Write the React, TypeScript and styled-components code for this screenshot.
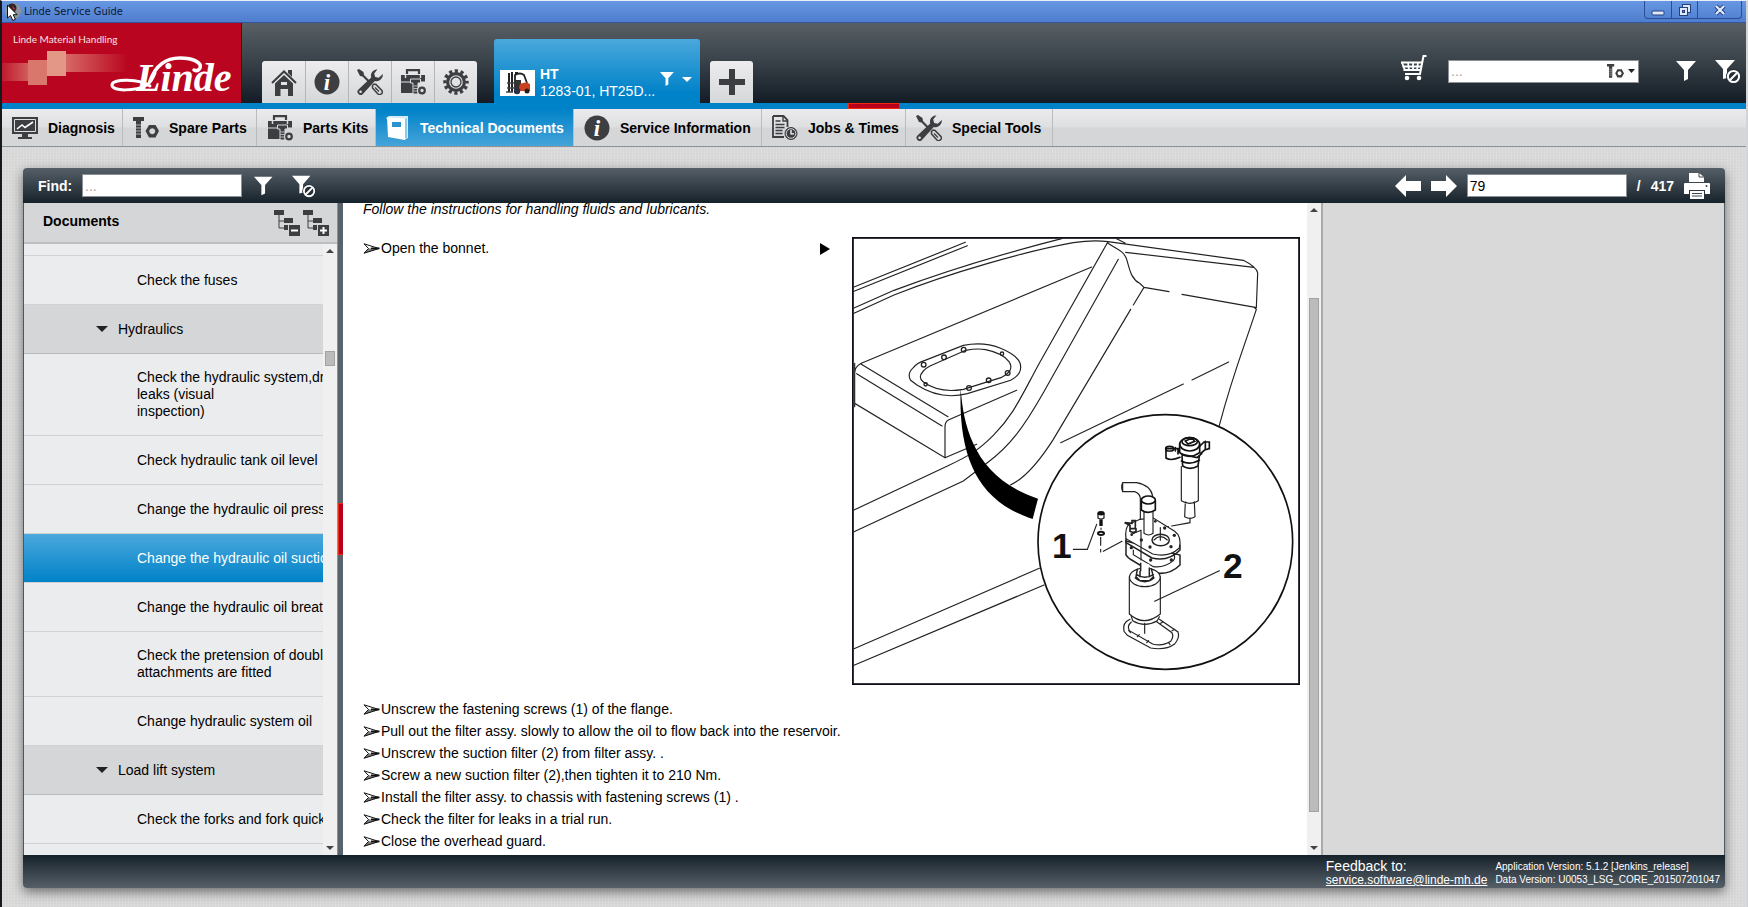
import React from "react";
import styled, { createGlobalStyle, css } from "styled-components";

const SANS = `"Liberation Sans", Arial, sans-serif`;
const BLUE = "#0082c8";

const Global = createGlobalStyle`
  *, *::before, *::after { box-sizing: border-box; }
  body { margin: 0; background: #fff; font-family: ${SANS}; font-size: 14px; color: #000; }
  button, input { font: inherit; color: inherit; margin: 0; }
  button { border: 0; padding: 0; background: none; cursor: pointer; }
  svg { display: block; flex: none; }
`;

/* ---------- window frame ---------- */

const Window = styled.div`
  display: flex;
  flex-direction: column;
  min-height: 100vh;
  border-left: 2px solid #15181c;
  border-right: 2px solid #d2d4d8;
  border-top: 1px solid #e8eef8;
`;

const TitleBar = styled.div`
  display: flex;
  align-items: flex-start;
  height: 22px;
  background: linear-gradient(#6797e2, #4f7dcf);
  border-bottom: 1px solid #34569a;
`;

const TitleText = styled.span`
  flex: 1;
  padding-left: 2px;
  font: 11px/21px "DejaVu Sans Condensed", "Noto Sans", sans-serif;
  color: #0c1730;
`;

const WindowButtons = styled.div`
  display: flex;
  margin-right: 4px;
  border: 1px solid #2b4c92;
  border-top: 0;
  border-radius: 0 0 4px 4px;
`;

const WindowButton = styled.button<{ $wide?: boolean }>`
  display: grid;
  place-items: center;
  width: ${(p) => (p.$wide ? 44 : 26)}px;
  height: 17px;
  & + & { border-left: 1px solid #2b4c92; }
`;

/* ---------- header ---------- */

const Header = styled.header`
  display: flex;
  align-items: flex-end;
  height: 80px;
  background: linear-gradient(#585f65, #3b444b 45%, #131c24);
`;

const Brand = styled.div`
  width: 240px;
  height: 80px;
  background: #b9051f;
  border-right: 1px solid #10161b;
`;

const IconTabs = styled.nav`
  display: flex;
  margin-left: 20px;
  border-radius: 3px 3px 0 0;
  overflow: hidden;
`;

const IconTab = styled.button`
  display: grid;
  place-items: center;
  width: 43px;
  height: 42px;
  background: linear-gradient(#ececee, #d6d7d9);
  & + & { border-left: 1px solid #b4b6b9; }
`;

const AddTab = styled(IconTab)`
  margin-left: 10px;
  border-radius: 3px 3px 0 0;
`;

const MachineTab = styled.button`
  display: flex;
  align-items: flex-end;
  width: 206px;
  height: 64px;
  margin-left: 17px;
  padding: 0 6px 3px;
  border-radius: 3px 3px 0 0;
  background: linear-gradient(#4aa8dc, ${BLUE} 85%);
  color: #fff;
  text-align: left;
`;

const Thumb = styled.span`
  display: grid;
  place-items: center;
  width: 35px;
  height: 26px;
  margin-bottom: 4px;
  background: #fff;
`;

const MachineName = styled.span`
  flex: 1;
  padding-left: 5px;
  line-height: 17px;
  white-space: nowrap;
  strong { display: block; }
`;

const MachineTools = styled.span`
  display: flex;
  align-items: center;
  gap: 4px;
  margin: 0 2px 12px 0;
`;

const HeaderTools = styled.div`
  display: flex;
  align-items: center;
  height: 26px;
  margin: 0 5px 19px auto;
`;

const IconButton = styled.button<{ $gap?: number }>`
  margin-left: ${(p) => p.$gap ?? 0}px;
`;

const SearchBox = styled.div`
  display: flex;
  align-items: center;
  width: 191px;
  height: 23px;
  margin: 0 37px 0 21px;
  padding-right: 3px;
  border: 1px solid #8b9196;
  background: #fff;
`;

const SearchInput = styled.input`
  flex: 1;
  min-width: 0;
  height: 21px;
  padding: 0 2px;
  border: 0;
  outline: 0;
  background: none;
  &::placeholder { color: #a5a5a5; opacity: 1; }
`;

/* ---------- module tabs ---------- */

const Strip = styled.div`
  display: flex;
  justify-content: center;
  height: 6px;
  background: ${BLUE};
`;

const StripHandle = styled.span`
  width: 52px;
  background: #b8001c;
  border: 1px solid #f22a10;
`;

const ModuleBar = styled.nav`
  display: flex;
  height: 38px;
  background: linear-gradient(#ebebed, #dedfe1 48%, #d5d6d8 52%);
  border-bottom: 1px solid #8d9295;
`;

const ModuleTab = styled.button<{ $width: number; $active?: boolean }>`
  display: flex;
  align-items: center;
  gap: 10px;
  width: ${(p) => p.$width}px;
  padding-left: 10px;
  border-right: 1px solid #b9bbbe;
  font-weight: bold;
  white-space: nowrap;
  ${(p) =>
    p.$active &&
    css`
      background: linear-gradient(${BLUE}, #46a4d9);
      color: #fff;
    `}
`;

/* ---------- main panel ---------- */

const Desk = styled.main`
  flex: 1;
  display: flex;
  padding: 21px 21px 19px;
  background:
    repeating-linear-gradient(90deg, rgba(255, 255, 255, 0.14) 0 1px, transparent 1px 3px),
    repeating-linear-gradient(rgba(0, 0, 0, 0.02) 0 1px, transparent 1px 3px),
    #d9d9d9;
`;

const Panel = styled.section`
  flex: 1;
  min-width: 0;
  display: flex;
  flex-direction: column;
  border-radius: 4px;
  overflow: hidden;
  box-shadow: 0 4px 12px rgba(0, 0, 0, 0.5);
`;

const Toolbar = styled.div`
  display: flex;
  align-items: center;
  height: 35px;
  padding: 0 15px;
  background: linear-gradient(#565f67, #16222a);
  color: #fff;
  font-weight: bold;
`;

const Field = styled.input`
  width: 160px;
  height: 23px;
  padding: 0 2px;
  border: 1px solid #8b9196;
  border-radius: 0;
  outline: 0;
  background: #fff;
  color: #000;
  font-weight: normal;
  &::placeholder { color: #a5a5a5; opacity: 1; }
`;

const FindLabel = styled.label`
  width: 44px;
`;

const PageTools = styled.div`
  display: flex;
  align-items: center;
  gap: 10px;
  margin-left: auto;
`;

const Columns = styled.div`
  flex: 1;
  display: flex;
  min-height: 0;
  border: solid #4e5860;
  border-width: 0 1px;
  background: #d9d9d9;
`;

const Sidebar = styled.aside`
  flex: none;
  width: 313px;
  display: flex;
  flex-direction: column;
  background: #ebecee;
`;

const SidebarHead = styled.div`
  display: flex;
  align-items: center;
  gap: 3px;
  height: 41px;
  padding: 0 8px 0 19px;
  background: #d5d6d8;
  border-bottom: 2px solid #bcbec1;
  h2 { flex: 1; margin: 0; padding-bottom: 3px; font-size: 14px; line-height: 17px; }
`;

const SidebarBody = styled.div`
  flex: 1;
  display: flex;
  min-height: 0;
`;

const Tree = styled.ul`
  flex: 1;
  min-width: 0;
  height: 610px;
  margin: 0;
  padding: 0;
  list-style: none;
  overflow: hidden;
  background: #ebecee;
`;

const TreeItem = styled.li<{ $rest?: boolean }>`
  ${(p) => p.$rest && css`height: 12px; border-bottom: 1px solid #cfd1d4;`}
`;

const TreeRow = styled.button<{ $kind: "leaf" | "group" | "selected" }>`
  display: flex;
  align-items: center;
  gap: 10px;
  width: 100%;
  min-height: 49px;
  padding: 15px 0 15px ${(p) => (p.$kind === "group" ? 72 : 113)}px;
  border-bottom: 1px solid #cfd1d4;
  line-height: 17px;
  text-align: left;
  white-space: pre;
  overflow: hidden;
  ${(p) => p.$kind === "group" && css`background: #d5d6d8; border-color: #b8bbbe;`}
  ${(p) => p.$kind === "selected" && css`background: linear-gradient(#4ba8dc, ${BLUE}); color: #fff;`}
`;

const Track = styled.div`
  flex: none;
  display: flex;
  flex-direction: column;
  align-items: center;
  width: 14px;
  background: #f0f0f1;
`;

const TrackArrow = styled.button`
  display: grid;
  place-items: center;
  width: 14px;
  height: 14px;
`;

const Part = styled.span<{ $share: number; $thumb?: boolean }>`
  flex: ${(p) => p.$share} 1 0;
  width: 10px;
  ${(p) => p.$thumb && css`background: #bbb; border: 1px solid #a3a3a3;`}
`;

const Splitter = styled.div`
  flex: none;
  display: flex;
  align-items: center;
  width: 6px;
  background: #58626a;
  border-left: 1px solid #8a9197;
`;

const SplitHandle = styled.span`
  width: 5px;
  height: 52px;
  background: #b8001c;
  border: solid #f22a10;
  border-width: 1px 0 1px 1px;
`;

const Viewer = styled.div`
  flex: 979 1 0;
  min-width: 0;
  display: flex;
  background: #fff;
  border-right: 2px solid #aaa;
`;

const Blank = styled.div`
  flex: 402 1 0;
`;

const Page = styled.article`
  flex: 1;
  min-width: 0;
  padding: 0 7px 0 20px;
`;

const Note = styled.p`
  margin: 0 0 22px;
  line-height: 12px;
  font-style: italic;
`;

const FigureRow = styled.div`
  display: flex;
  margin-bottom: 13px;
`;

const Pointer = styled.span`
  margin: 6px 22px 0 auto;
`;

const Steps = styled.ul`
  margin: 0;
  padding: 0;
  list-style: none;
`;

const StepText = styled.li`
  display: flex;
  align-items: center;
  gap: 1px;
  height: 22px;
  line-height: 22px;
  white-space: nowrap;
`;

const Footer = styled.footer`
  display: flex;
  justify-content: flex-end;
  gap: 8px;
  height: 33px;
  padding-right: 5px;
  background: linear-gradient(#16222a, #565f67);
  color: #fff;
`;

const Feedback = styled.div`
  padding-top: 3px;
  line-height: 16px;
  a { display: block; color: #fff; font-size: 12px; line-height: 13px; }
`;

const Versions = styled.div`
  padding-top: 5px;
  font-size: 10px;
  line-height: 13px;
  white-space: nowrap;
`;

/* ---------- icons ---------- */

const INK = "#3c3e41";

const Home = () => (
  <svg width="26" height="27" viewBox="0 0 26 27" fill={INK}>
    <path d="M17 1h4v7l-4-4z" />
    <path d="M1 14 13 2.500 25 14" fill="none" stroke={INK} strokeWidth="2" />
    <path d="M4 14.500 13 6l9 8.500V27h-5v-7H9.500v7H4z" />
    <path d="M10 13h6v3h-6z" fill="#e2e3e5" />
  </svg>
);

const Info = () => (
  <svg width="26" height="26" viewBox="0 0 26 26">
    <circle cx="13" cy="13" r="12.500" fill={INK} />
    <text x="13" y="20.500" textAnchor="middle" fill="#fff" fontFamily="Liberation Serif, serif" fontStyle="italic" fontWeight="bold" fontSize="23">i</text>
  </svg>
);

const Tools = () => (
  <svg width="26" height="26" viewBox="0 0 26 26">
    <path d="m0 1 2-1 4.500 3 .5 3 6 6-1.500 1.500-6-6-2.500-.5z" fill={INK} />
    <path d="M15.500 16.500l1.500-1.500 2 .5 5.500 5.500a2.600 2.600 0 0 1-3.800 3.800L15.500 19z" fill="#d6d7d9" stroke={INK} strokeWidth="1.500" />
    <path d="m18 18.500 4 4" stroke={INK} strokeWidth="1.300" />
    <path d="M20.500.2a6.500 6.500 0 0 0-6.300 8.300L1.200 20.800a3.200 3.200 0 0 0 4.500 4.500L17.800 12A6.500 6.500 0 0 0 25.800 5l-4 3.800-3.600-.8-1-3.600z" fill={INK} />
    <circle cx="3.600" cy="22.700" r="1.300" fill="#e2e3e5" />
  </svg>
);

const Toolbox = () => (
  <svg width="26" height="26" viewBox="0 0 26 26" fill={INK}>
    <path d="M7 5V1.200h12V5" fill="none" stroke={INK} strokeWidth="2.200" />
    <path d="M1 6h24v6.500H1z" />
    <path d="M1 13.500h12V24H1z" />
    <path d="M5.500 6v3M20.500 6v3" stroke="#d9dadc" strokeWidth="1.500" />
    <path d="M10.500 10h10v4h-2.500v11h-5V14h-2.500z" stroke="#d9dadc" strokeWidth="1" />
    <path d="M13.500 17h4M13.500 19.500h4M13.500 22h4" stroke="#d9dadc" strokeWidth=".8" />
    <circle cx="22" cy="21.500" r="5" fill="#d9dadc" />
    <circle cx="22" cy="21.500" r="2.800" fill="none" stroke={INK} strokeWidth="2.200" />
  </svg>
);

const Gear = () => (
  <svg width="26" height="26" viewBox="0 0 26 26" fill="none" stroke={INK}>
    <circle cx="13" cy="13" r="11" strokeWidth="3.500" strokeDasharray="3.200 2.560" strokeDashoffset="1.600" />
    <circle cx="13" cy="13" r="8.400" strokeWidth="3.200" />
    <circle cx="13" cy="13" r="5" strokeWidth="1.300" />
  </svg>
);

const Plus = () => (
  <svg width="26" height="26" viewBox="0 0 26 26" fill={INK}>
    <path d="M10 0h6v10h10v6H16v10h-6V16H0v-6h10z" />
  </svg>
);

const Monitor = () => (
  <svg width="26" height="22" viewBox="0 0 26 22" fill={INK}>
    <path d="M0 0h26v17H0z" />
    <path d="M2.500 2.500h21v12h-21z" stroke="#dcdde0" strokeWidth="1" />
    <path d="m5 12 5-4 3 2.500L21 5" fill="none" stroke="#fff" strokeWidth="1.600" />
    <path d="M10 17h6v3h4v2H6v-2h4z" />
  </svg>
);

const Bolts = ({ size = 26 }: { size?: number }) => (
  <svg width={size} height={(size * 22) / 26} viewBox="0 0 26 22" fill={INK}>
    <path d="M0 0h11v4H8v17H3V4H0z" />
    <path d="M3 8h5M3 11h5M3 14h5M3 17h5" stroke="#cfd0d2" strokeWidth=".8" />
    <path fillRule="evenodd" d="m16 8 6.500 0 3.500 6-3.500 6.500H16L12.500 14zm3.200 3.200a3 3 0 1 0 .1 0z" />
  </svg>
);

const Book = () => (
  <svg width="24" height="26" viewBox="0 0 24 26">
    <path d="M0 3 3 1l19 0v22l-4 2z" fill="#d6ebf7" />
    <path d="M1 2.500 19 3.500V25L2 22z" fill="#fff" />
    <path d="M6 7h9v5H6z" fill="#2d93cd" />
    <path d="M20 3.500V23" stroke="#4aa3d6" strokeWidth="1" />
  </svg>
);

const Jobs = () => (
  <svg width="26" height="26" viewBox="0 0 26 26" fill="none" stroke={INK}>
    <path d="M1 1h10.500l4 4v7M12 22H1V1" strokeWidth="1.800" />
    <path d="M11 1v5h5" strokeWidth="1.400" />
    <path d="M3.500 6h5M3.500 9.500h9M3.500 12.500h9M3.500 15.500h7M3.500 18.500h7" strokeWidth="1.400" />
    <circle cx="19" cy="18.500" r="6" fill={INK} strokeWidth="1" />
    <circle cx="19" cy="18.500" r="4.800" stroke="#d9dadc" strokeWidth="1" />
    <path d="M19 15v3.800h3" stroke="#fff" strokeWidth="1.300" />
  </svg>
);

const Funnel = ({ size = 26 }: { size?: number }) => (
  <svg width={size} height={size} viewBox="0 0 26 26" fill="#fff">
    <path d="M0 3h20l-8 9v9l-4 2V12z" />
  </svg>
);

const FunnelOff = ({ size = 26 }: { size?: number }) => (
  <svg width={size} height={size} viewBox="0 0 26 26" fill="#fff">
    <path d="M0 2h20l-8 9v9l-4 1V11z" />
    <circle cx="18.500" cy="18.500" r="7.500" fill="#252f37" />
    <circle cx="18.500" cy="18.500" r="5.600" fill="none" stroke="#fff" strokeWidth="2" />
    <path d="m14.800 22.200 7.400-7.400" stroke="#fff" strokeWidth="2" />
  </svg>
);

const Cart = () => (
  <svg width="26" height="32" viewBox="0 0 26 32" fill="none" stroke="#fff">
    <path d="M25.500 1h-3L19 19H4" strokeWidth="2" />
    <path d="M0 7.500h21.500M1.500 11.500h19M2.500 15h17" strokeWidth="2" />
    <path d="M1 7.500l3 8M7 7.500l1 8M12 7.500v8M17 7.500l-1 8" strokeWidth="1.800" />
    <circle cx="6" cy="23" r="2.300" fill="#fff" stroke="none" />
    <circle cx="18" cy="23" r="2.300" fill="#fff" stroke="none" />
  </svg>
);

const Caret = ({ color = "#222", width = 12, height = 6, up = false }) => (
  <svg width={width} height={height} viewBox="0 0 12 6" preserveAspectRatio="none" fill={color}>
    <path d={up ? "M0 6h12L6 0z" : "M0 0h12L6 6z"} />
  </svg>
);

const Arrow = ({ back }: { back?: boolean }) => (
  <svg width="26" height="22" viewBox="0 0 26 22" fill="#fff">
    <path d={back ? "M0 11 11 0v6h15v10H11v6z" : "M26 11 15 0v6H0v10h15v6z"} />
  </svg>
);

const Printer = () => (
  <svg width="26" height="26" viewBox="0 0 26 26" fill="#fff">
    <path d="M5 9V0h10l5 4v5z" />
    <path d="M15 0v4h5" fill="none" stroke="#3a444c" />
    <path d="M0 11q0-1 1-1h24q1 0 1 1v10h-5v-4H5v4H0z" />
    <path d="M6 18h14v8H6z" />
    <path d="M8 20.500h10M8 23h10" stroke="#3a444c" />
    <circle cx="22.500" cy="13" r="1" fill="#3a444c" />
  </svg>
);

const TreeIcon = ({ plus }: { plus?: boolean }) => (
  <svg width="26" height="26" viewBox="0 0 26 26" fill={INK}>
    <path d="M0 0h10v5H0zM10 8h9v5h-9zM10 15h4v5h-4z" />
    <path d="M5 5v13h5M5 11h5" fill="none" stroke={INK} />
    <path d="M15 15h11v11H15z" />
    <path d={plus ? "M17 20.500h7M20.500 17v7" : "M17 20.500h7"} stroke="#fff" strokeWidth="2" />
  </svg>
);

const StepMark = () => (
  <svg width="17" height="11" viewBox="0 0 17 11">
    <path d="M1 .8 16 5.500 1 10.200 5.500 5.500z" fill="#fff" stroke="#111" strokeWidth="1" />
    <path d="m5.500 5.500 11 0L1 10.500z" fill="#111" opacity=".55" />
    <path d="M8 4.500h8.500v1.800H8z" fill="#111" />
  </svg>
);

const Forklift = () => (
  <svg width="24" height="24" viewBox="0 0 24 24">
    <path d="M3 2v19M6 1v20M9 2l3 0" stroke="#222" strokeWidth="2" />
    <path d="M9 11V4q5-3 9 0l3 8" fill="none" stroke="#222" strokeWidth="1.800" />
    <path d="M8 9h7v9H8z" fill="#333" />
    <path d="M14 13q6-3 10 0v7H12z" fill="#c8401f" />
    <path d="M1 12h8M0 21h7M1 17h8" stroke="#444" strokeWidth="1.500" />
    <circle cx="11" cy="20" r="3.200" fill="#2c2f45" />
    <circle cx="21" cy="20" r="2.500" fill="#2c1b1b" />
  </svg>
);

const AppIcon = () => (
  <svg width="20" height="21" viewBox="0 0 20 21">
    <circle cx="11" cy="10" r="8" fill="#8e959c" />
    <circle cx="10" cy="7" r="4.500" fill="#23262b" />
    <path d="m10 4 4 5-3-1z" fill="#d8202c" />
    <path d="M5.500 4v13l3-2.500 2.300 5 2.600-1.200-2.200-4.600h4z" fill="#fff" stroke="#111" />
  </svg>
);

const BrandArt = () => (
  <svg width="239" height="80" viewBox="0 0 239 80" role="img" aria-label="Linde">
    <defs>
      <linearGradient id="fadeL"><stop offset="0" stopColor="#e08a7c" stopOpacity=".15" /><stop offset="1" stopColor="#e08a7c" stopOpacity=".65" /></linearGradient>
      <linearGradient id="fadeR"><stop offset="0" stopColor="#e08a7c" stopOpacity=".75" /><stop offset="1" stopColor="#e08a7c" stopOpacity="0" /></linearGradient>
    </defs>
    <text x="11" y="20" fill="#f7e3e1" fontFamily="Lato, sans-serif" fontSize="10">Linde Material Handling</text>
    <path d="M0 40h26v18H0z" fill="url(#fadeL)" />
    <path d="M26 37h19v25H26z" fill="#d9776c" />
    <path d="M45 28h19v25H45z" fill="#e29787" />
    <path d="M64 31h62v18H64z" fill="url(#fadeR)" />
    <text x="134" y="68" fill="#fff" fontFamily="Liberation Serif, serif" fontSize="40" fontWeight="bold" fontStyle="italic">Linde</text>
    <g fill="none" stroke="#fff" strokeLinecap="round">
      <path d="M148 58C153 44 163 35 178 35c14 0 22 5 20 10q-2 4-6 2" strokeWidth="3.500" />
      <path d="M148 63C138 56 110 55 110 62c0 7 24 6 35 0q5-4 8-12" strokeWidth="3" />
    </g>
  </svg>
);

/* Hydraulic tank with the suction filter shown enlarged in the circle */
const Drawing = () => (
  <svg width="448" height="448" viewBox="36 33 1344 1344" fill="none" stroke="#222" strokeWidth="3.500" strokeLinecap="round" role="img" aria-label="Suction filter">
    <rect x="38.500" y="35.500" width="1339" height="1339" fill="#fff" stroke="#10101a" strokeWidth="6" />
    <path d="M42 183 376 49M42 196 382 59M42 246l120-53C330 130 520 75 665 38M42 262l120-55C330 140 560 75 700 50q60-9 104-3M755 123 64 412M804 47 600 408c-60 110-80 160-140 220-45 45-75 63-136 91L42 852M835 100 610 500c-60 105-100 160-170 212L370 765 42 917M804 47l406 56q40 20 43 38l-4 104-6 0 6 5C1210 370 1180 440 1138 598M830 38l25 13M857 79l385 45M804 52c30 20 45 22 55 45 10 30 12 60 40 75l13 12-32 53M872 250 640 640q-70 110-129 137M912 184l75 13M1026 205l220 39M1166 408l-110 54M1030 474 662 650M42 1268 598 1027M42 1318 612 1077" />
    <path d="M64 412q-20 10-20 30V532L315 695V602q0-14 10-20l205-89M64 415l260 157M50 443l256 157M315 695 410 655M44 412v130" />
    <path d="M220 425q-20 18-8 38l20 15q70 45 150 25l130-40q38-20 28-52-10-25-60-45-50-20-110-8L255 403q-25 8-35 22z" />
    <path d="M250 435q-18 20 0 33 50 35 120 22l115-36q40-20 22-47-18-25-70-36-25-5-60 2L270 420q-10 5-20 15z" />
    <g strokeWidth="4">
      <circle cx="251" cy="416" r="7" /><circle cx="312" cy="394" r="7" /><circle cx="371" cy="371" r="7" />
      <circle cx="486" cy="383" r="5" /><circle cx="503" cy="441" r="7" /><circle cx="446" cy="463" r="7" />
      <circle cx="387" cy="486" r="7" /><circle cx="257" cy="475" r="5" />
    </g>
    <path d="M362 487c8 120 45 270 232 331l-16 61C410 825 355 690 362 487z" fill="#000" stroke="none" />
    <circle cx="976" cy="948" r="382" fill="#fff" stroke="#111" strokeWidth="5" />

    {/* filter head and cartridge, upper right */}
    <path d="M1024 722v102q25 16 51 0V722M1036 828l-2 44q16 10 31 0l-2-44M1036 828q14 8 28 0M1050 876v14l-55 10M985 902l-20 3M961 905v38" />
    <g stroke="#111" strokeWidth="5">
      <ellipse cx="1049" cy="655" rx="30" ry="20" fill="#fff" />
      <ellipse cx="1049" cy="647" rx="23" ry="12" />
      <path d="m1036 645 20-9 8 10-20 8zM1019 655v25q28 22 60 0v-25M1026 690l2 30q22 14 46 0l4-30M1024 705q25 14 54-2M978 668v28q14 10 42-2M980 668h34v16" />
      <ellipse cx="989" cy="668" rx="12" ry="7" />
      <path d="m1080 660 12-12 16 0v20l-14 4-12 10M1086 680l-10 12M1096 646v24M1006 675v-10M1026 685l45 10 14-12" />
    </g>

    {/* bent pipe and stand pipe */}
    <path d="M848 770v26M848 770h42q42 8 48 40M848 797h36q16 6 17 20v77M848 770q-6 13 0 27" />
    <path d="M901 895v30" />

    {/* flange plate and gasket */}
    <path d="M858 945v42q6 8 12 12l66 40q50 12 84-22v-30z" fill="#fff" strokeWidth="4.500" />
    <path d="M880 972v14l60 36q34 4 60-18 8-10 0-22" />
    <path d="M900 880l-32 14q-14 12-10 44l80 46q48 12 80-18 8-34-14-50l-64-40z" fill="#fff" />
    <path d="M858 938v12l78 46q50 12 84-24v-14" strokeWidth="4.500" />
    <ellipse cx="962" cy="942" rx="26" ry="17" strokeWidth="4.500" />
    <path d="M942 942q18-20 40 0" />
    <path d="M854 890l22 2v-8h10v24h-16v-10zM870 908v8q10 6 18 0v-8" strokeWidth="5" />
    <g fill="#222" stroke="none">
      <circle cx="904" cy="942" r="5" /><circle cx="974" cy="906" r="5" /><circle cx="1003" cy="928" r="5" />
      <circle cx="930" cy="963" r="5" /><circle cx="993" cy="962" r="5" /><circle cx="946" cy="886" r="4" />
      <circle cx="874" cy="965" r="5" /><circle cx="932" cy="1002" r="5" /><circle cx="994" cy="1002" r="5" /><circle cx="875" cy="926" r="4" />
    </g>
    <path d="M903 912v90M875 925l28-12M961 905v38" />
    <path d="M912 850v72q14 10 27 0v-72" fill="#fff" />
    <path d="M904 824v28q20 14 42 0v-28" fill="#fff" stroke="#111" strokeWidth="5" />
    <ellipse cx="925" cy="822" rx="21" ry="12" fill="#fff" stroke="#111" strokeWidth="5" />

    {/* filter canister */}
    <path d="M868 1052v112q44 40 93 0v-112" fill="#fff" />
    <ellipse cx="914.500" cy="1054" rx="46" ry="28" fill="#fff" />
    <path d="M902 1012v24h26v-22" fill="#fff" stroke="none" />
    <path d="M902 1012v22M928 1026v8M892 1030l-4 22 12 12h28l12-12-6-24M890 1046q24 16 50 0M900 1036v16M928 1036v16M886 1056q28 22 56 0" strokeWidth="4.500" />
    <path d="M874 1172l4 12q36 22 74 0l6-12" />

    {/* lower gasket */}
    <path d="M870 1180q-24 10-18 36l10 12 70 38q44 8 72-12 16-20 10-36l-56-38" />
    <path d="M874 1188q-14 12-6 26l70 40q30 8 54-8 10-14 4-26l-48-34M914 1192v30" />
    <path d="M866 1214l6 6M892 1232l6-6M920 1250l6-6M986 1250l4 6M996 1214l8-4M962 1192l6-4" />

    {/* screw, washer and leaders */}
    <g stroke="#111">
      <ellipse cx="783" cy="862" rx="9" ry="5" fill="#111" />
      <path d="M774 862v14q9 6 18 0v-14" />
      <path d="M783 880v20" strokeWidth="10" strokeLinecap="butt" />
      <ellipse cx="783" cy="922" rx="9" ry="5" strokeWidth="6" />
    </g>
    <path d="M783 906v4M782 934v24M782 970v8M790 976l56-30M770 895l-28 75h-42M1138 1034 944 1126" />
    <g fill="#111" stroke="none" fontFamily="Liberation Sans, Arial, sans-serif" fontWeight="bold" fontSize="106">
      <text x="636" y="995">1</text>
      <text x="1149" y="1057">2</text>
    </g>
  </svg>
);

/* ---------- content ---------- */

const modules: { label: string; icon: React.ReactNode; width: number; active?: boolean }[] = [
  { label: "Diagnosis", icon: <Monitor />, width: 121 },
  { label: "Spare Parts", icon: <Bolts />, width: 134 },
  { label: "Parts Kits", icon: <Toolbox />, width: 119 },
  { label: "Technical Documents", icon: <Book />, width: 198, active: true },
  { label: "Service Information", icon: <Info />, width: 188 },
  { label: "Jobs & Times", icon: <Jobs />, width: 144 },
  { label: "Special Tools", icon: <Tools />, width: 147 },
];

const tree: { text: string; kind?: "group" | "selected" }[] = [
  { text: "Check the fuses" },
  { text: "Hydraulics", kind: "group" },
  { text: "Check the hydraulic system,dri\nleaks (visual\ninspection)" },
  { text: "Check hydraulic tank oil level" },
  { text: "Change the hydraulic oil press" },
  { text: "Change the hydraulic oil suctio", kind: "selected" },
  { text: "Change the hydraulic oil breath" },
  { text: "Check the pretension of double\nattachments are fitted" },
  { text: "Change hydraulic system oil" },
  { text: "Load lift system", kind: "group" },
  { text: "Check the forks and fork quick-" },
];

const steps = [
  "Unscrew the fastening screws (1) of the flange.",
  "Pull out the filter assy. slowly to allow the oil to flow back into the reservoir.",
  "Unscrew the suction filter (2) from filter assy. .",
  "Screw a new suction filter (2),then tighten it to 210 Nm.",
  "Install the filter assy. to chassis with fastening screws (1) .",
  "Check the filter for leaks in a trial run.",
  "Close the overhead guard.",
];

const Scrollbar = ({ before, thumb, after }: { before: number; thumb: number; after: number }) => (
  <Track>
    <TrackArrow aria-label="Scroll up"><Caret up color="#444" width={8} height={4} /></TrackArrow>
    <Part $share={before} />
    <Part $share={thumb} $thumb />
    <Part $share={after} />
    <TrackArrow aria-label="Scroll down"><Caret color="#444" width={8} height={4} /></TrackArrow>
  </Track>
);

export default function App() {
  return (
    <Window>
      <Global />
      <TitleBar>
        <AppIcon />
        <TitleText>Linde Service Guide</TitleText>
        <WindowButtons>
          <WindowButton aria-label="Minimize">
            <svg width="14" height="14" viewBox="0 0 14 14"><rect x="1" y="8" width="12" height="4" rx="1" fill="#dfe8f8" stroke="#22407f" /></svg>
          </WindowButton>
          <WindowButton aria-label="Restore">
            <svg width="14" height="14" viewBox="0 0 14 14" fill="#dfe8f8" stroke="#22407f"><rect x="4.500" y="1.500" width="8" height="8" /><rect x="1.500" y="4.500" width="8" height="8" /><rect x="4.500" y="7.500" width="2" height="2" fill="#5b88d6" /></svg>
          </WindowButton>
          <WindowButton $wide aria-label="Close">
            <svg width="14" height="14" viewBox="0 0 14 14"><path d="m3 3 8 8M11 3l-8 8" stroke="#22407f" strokeWidth="4" /><path d="m3 3 8 8M11 3l-8 8" stroke="#e8eefb" strokeWidth="2.200" /></svg>
          </WindowButton>
        </WindowButtons>
      </TitleBar>

      <Header>
        <Brand><BrandArt /></Brand>
        <IconTabs>
          <IconTab aria-label="Home"><Home /></IconTab>
          <IconTab aria-label="Information"><Info /></IconTab>
          <IconTab aria-label="Tools"><Tools /></IconTab>
          <IconTab aria-label="Toolbox"><Toolbox /></IconTab>
          <IconTab aria-label="Settings"><Gear /></IconTab>
        </IconTabs>
        <MachineTab>
          <Thumb><Forklift /></Thumb>
          <MachineName><strong>HT</strong>1283-01, HT25D...</MachineName>
          <MachineTools><Funnel size={18} /><Caret color="#fff" width={10} height={5} /></MachineTools>
        </MachineTab>
        <AddTab aria-label="Add machine"><Plus /></AddTab>
        <HeaderTools>
          <IconButton aria-label="Cart"><Cart /></IconButton>
          <SearchBox>
            <SearchInput aria-label="Search parts" placeholder="..." />
            <IconButton aria-label="Search in parts"><Bolts size={17} /></IconButton>
            <IconButton $gap={4} aria-label="Choose search"><Caret width={7} height={4} /></IconButton>
          </SearchBox>
          <IconButton aria-label="Filter"><Funnel /></IconButton>
          <IconButton $gap={13} aria-label="Clear filter"><FunnelOff /></IconButton>
        </HeaderTools>
      </Header>

      <Strip><StripHandle /></Strip>

      <ModuleBar>
        {modules.map((m) => (
          <ModuleTab key={m.label} $width={m.width} $active={m.active}>{m.icon}{m.label}</ModuleTab>
        ))}
      </ModuleBar>

      <Desk>
        <Panel>
          <Toolbar>
            <FindLabel htmlFor="find">Find:</FindLabel>
            <Field id="find" placeholder="..." />
            <IconButton $gap={12} aria-label="Apply filter"><Funnel size={24} /></IconButton>
            <IconButton $gap={14} aria-label="Remove filter"><FunnelOff size={24} /></IconButton>
            <PageTools>
              <IconButton aria-label="Previous page"><Arrow back /></IconButton>
              <IconButton aria-label="Next page"><Arrow /></IconButton>
              <Field aria-label="Page" defaultValue="79" />
              <span>/</span>
              <span>417</span>
              <IconButton aria-label="Print"><Printer /></IconButton>
            </PageTools>
          </Toolbar>

          <Columns>
            <Sidebar>
              <SidebarHead>
                <h2>Documents</h2>
                <IconButton aria-label="Collapse all"><TreeIcon /></IconButton>
                <IconButton aria-label="Expand all"><TreeIcon plus /></IconButton>
              </SidebarHead>
              <SidebarBody>
                <Tree>
                  <TreeItem $rest />
                  {tree.map((t) => (
                    <TreeItem key={t.text}>
                      <TreeRow $kind={t.kind ?? "leaf"}>
                        {t.kind === "group" && <Caret />}
                        {t.text}
                      </TreeRow>
                    </TreeItem>
                  ))}
                </Tree>
                <Scrollbar before={93} thumb={13} after={477} />
              </SidebarBody>
            </Sidebar>
            <Splitter><SplitHandle /></Splitter>
            <Viewer>
              <Page>
                <Note>Follow the instructions for handling fluids and lubricants.</Note>
                <FigureRow>
                  <Steps><StepText><StepMark />Open the bonnet.</StepText></Steps>
                  <Pointer><svg width="10" height="12" viewBox="0 0 10 12"><path d="M0 0v12l10-6z" /></svg></Pointer>
                  <Drawing />
                </FigureRow>
                <Steps>
                  {steps.map((s) => (
                    <StepText key={s}><StepMark />{s}</StepText>
                  ))}
                </Steps>
              </Page>
              <Scrollbar before={81} thumb={513} after={29} />
            </Viewer>
            <Blank />
          </Columns>

          <Footer>
            <Feedback>
              Feedback to:
              <a href="mailto:service.software@linde-mh.de">service.software@linde-mh.de</a>
            </Feedback>
            <Versions>
              <div>Application Version: 5.1.2 [Jenkins_release]</div>
              <div>Data Version: U0053_LSG_CORE_201507201047</div>
            </Versions>
          </Footer>
        </Panel>
      </Desk>
    </Window>
  );
}
